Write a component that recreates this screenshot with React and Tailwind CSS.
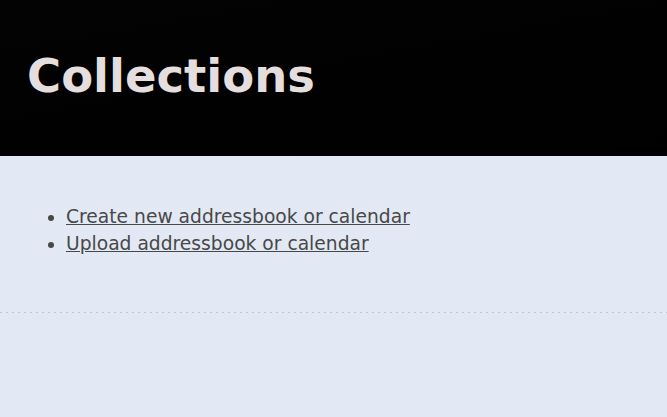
export default function App() {
  return (
    <div className="min-h-[417px] bg-[#e3e9f4] font-['DejaVu_Sans',sans-serif]">
      <header className="h-[156px] bg-[linear-gradient(170deg,#020302,#000000)] flex items-center px-[27px]">
        <h1 className="text-[46.5px] font-bold leading-none text-[#e4dede] -mt-[4px]">Collections</h1>
      </header>
      <main className="pt-[47px] pl-[48px] h-[156px]">
        <ul className="list-disc pl-[18px] text-[18.7px] leading-[27px] text-[#484848] marker:text-[#484848]">
          <li><a href="#" className="underline">Create new addressbook or calendar</a></li>
          <li><a href="#" className="underline">Upload addressbook or calendar</a></li>
        </ul>
      </main>
      <div className="h-px bg-[repeating-linear-gradient(90deg,#c2c6cc_0px,#c2c6cc_2px,transparent_2px,transparent_6px)]" />
    </div>
  );
}
